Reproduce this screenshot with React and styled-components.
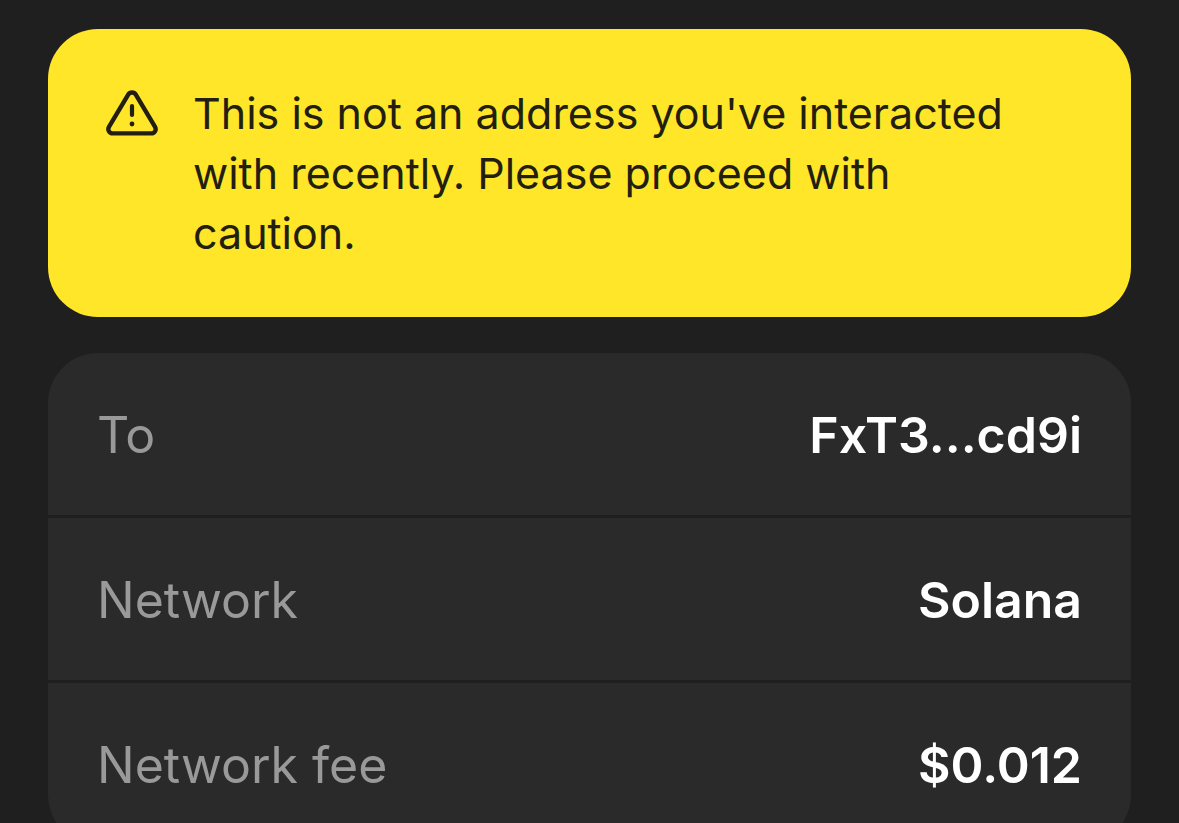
import React from 'react';
import styled, { createGlobalStyle } from 'styled-components';

const theme = {
  page: '#1f1f1f',
  card: '#2a2a2a',
  warning: '#ffe629',
  ink: '#231f10',
  muted: '#999999',
  light: '#ffffff',
};

const GlobalStyle = createGlobalStyle`
  * {
    box-sizing: border-box;
  }
  body {
    margin: 0;
    background: ${theme.page};
    font-family: Inter, 'Liberation Sans', sans-serif;
  }
`;

const Screen = styled.main`
  height: 100vh;
  overflow: hidden;
  display: flex;
  flex-direction: column;
  gap: 36px;
  padding: 29px 48px 0;
`;

const Warning = styled.section`
  flex-shrink: 0;
  display: flex;
  gap: 35px;
  padding: 54px 58px;
  border-radius: 50px;
  background: ${theme.warning};
  color: ${theme.ink};
  svg {
    flex-shrink: 0;
    margin-top: 6px;
  }
  p {
    max-width: 840px;
    margin: 0;
    font-size: 43px;
    line-height: 60px;
  }
`;

const Details = styled.dl`
  flex-shrink: 0;
  margin: 0;
  border-radius: 50px;
  overflow: hidden;
`;

const Row = styled.div`
  display: flex;
  align-items: center;
  justify-content: space-between;
  padding: 52px 49px 50px;
  background: ${theme.card};
  font-size: 50px;
  line-height: 60px;
  & + & {
    margin-top: 3px;
  }
  dt {
    color: ${theme.muted};
  }
  dd {
    margin: 0;
    color: ${theme.light};
    font-weight: 600;
  }
`;

const WarningIcon = () =>
  <svg width="52" height="48" viewBox="0 0 52 48" fill="none" stroke="currentColor" aria-hidden="true">
    <path
      d="M22.2 5.6 3.1 37.6c-1.9 3.2.1 6.8 3.7 6.8h38.4c3.6 0 5.6-3.6 3.7-6.8L29.8 5.6c-1.7-2.9-5.9-2.9-7.6 0Z"
      strokeWidth="4.4"
      strokeLinejoin="round"
    />
    <path d="M26 17v9" strokeWidth="4.2" strokeLinecap="round" />
    <circle cx="26" cy="35" r="2.4" fill="currentColor" stroke="none" />
  </svg>;

const details = [
  { label: 'To', value: 'FxT3...cd9i' },
  { label: 'Network', value: 'Solana' },
  { label: 'Network fee', value: '$0.012' },
];

export default () =>
  <Screen>
    <GlobalStyle />
    <Warning role="alert">
      <WarningIcon />
      <p>
        This is not an address you've interacted with recently. Please proceed with caution.
      </p>
    </Warning>
    <Details>
      {details.map(({ label, value }) =>
        <Row key={label}>
          <dt>{label}</dt>
          <dd>{value}</dd>
        </Row>
      )}
    </Details>
  </Screen>;
